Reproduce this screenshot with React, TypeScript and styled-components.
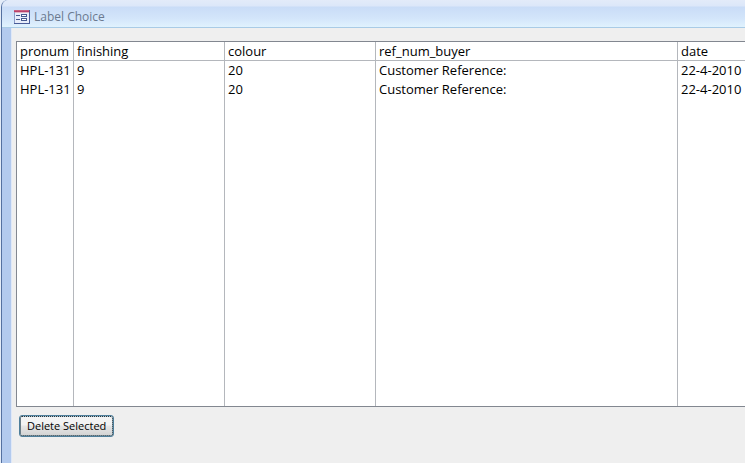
import React from "react";
import styled, { createGlobalStyle } from "styled-components";

const GlobalStyle = createGlobalStyle`
  * { box-sizing: border-box; }
  body { margin: 0; background: #e4ecf8; }
`;

const Frame = styled.div`
  display: flex;
  flex-direction: column;
  height: 100vh;
  min-height: 200px;
  overflow: hidden;
  margin-left: 1px;
  border-left: 1px solid #5571a0;
  border-top-left-radius: 7px;
  background: #b3caee;
`;

const TitleBar = styled.header`
  display: flex;
  align-items: center;
  gap: 4px;
  height: 28px;
  flex: none;
  padding: 6px 12px 0;
  border-bottom: 1px solid #a9cbe6;
  background: linear-gradient(#e3ebf9 0, #dce7f9 6px, #c9dcf7 7px, #d3e5fa 18px, #e0f2fe 27px);
`;

const Title = styled.h1`
  margin: 0;
  font: 400 12px/18px "Open Sans", sans-serif;
  color: #6b7a90;
`;

const Body = styled.main`
  display: flex;
  flex-direction: column;
  flex: 1;
  min-height: 0;
  margin-left: 9px;
  padding: 13px 0 0 4px;
  border-left: 1px solid #dfe8f7;
  background: #efefef;
`;

const ListBox = styled.div`
  display: grid;
  flex: 1;
  min-height: 0;
  border: 1px solid #828790;
  border-right: 0;
  background: #fff;
`;

const List = styled.table`
  width: 100%;
  height: 100%;
  table-layout: fixed;
  border-collapse: separate;
  border-spacing: 0;
  font: 400 13px/18px "Open Sans", sans-serif;
  color: #000;
`;

const Column = styled.col<{ $width?: number }>`
  width: ${({ $width }) => ($width ? `${$width}px` : "auto")};
`;

const Row = styled.tr`
  height: 19px;
`;

const FillerRow = styled.tr`
  height: auto;
`;

const Cell = styled.td`
  padding: 0 0 1px 3px;
  border-right: 1px solid #b4b7bc;
  text-align: left;
  white-space: nowrap;
  &:last-child { border-right: 0; }
`;

const HeadCell = styled(Cell).attrs({ as: "th", scope: "col" })`
  padding-bottom: 0;
  border-bottom: 1px solid #b4b7bc;
  font-weight: 400;
`;

const Actions = styled.footer`
  flex: none;
  height: 56px;
  padding: 8px 3px;
`;

const Button = styled.button`
  height: 22px;
  padding: 0 7px;
  border: 1px solid #4f7f9b;
  border-radius: 3px;
  outline: 1px dotted #333;
  outline-offset: -2px;
  box-shadow: inset 0 0 0 1px #a5c9dc;
  background: linear-gradient(#f3f3f3 0 45%, #e6e6e6 50%, #d2d2d2);
  font: 400 11px/18px "Open Sans", sans-serif;
  color: #000;
`;

const FormIcon = () => (
  <svg width="16" height="16" viewBox="0 0 16 16" aria-hidden="true" shapeRendering="crispEdges">
    <path d="M0 1h16v14H0z" fill="#e8edfa" />
    <path d="M0 1h15v1H0z" fill="#c9607f" />
    <path d="M0 2h15v1H0z" fill="#b8416b" />
    <path d="M0 3h15v1H0z" fill="#e0b4c4" />
    <path d="M0 3h1v11H0z" fill="#8a9bc8" />
    <path d="M15 1h1v14H0v-1h15z" fill="#4a5c98" />
    <path d="M2 6h4v1H2zM2 10h4v1H2z" fill="#46598f" />
    <path d="M7.5 5.5h5v2h-5zM7.5 9.5h5v2h-5z" fill="#fff" stroke="#46598f" />
  </svg>
);

const columns = [
  { name: "pronum", width: 57 },
  { name: "finishing", width: 151 },
  { name: "colour", width: 151 },
  { name: "ref_num_buyer", width: 302 },
  { name: "date", width: undefined },
];

const rows = [
  ["HPL-131", "9", "20", "Customer Reference:", "22-4-2010"],
  ["HPL-131", "9", "20", "Customer Reference:", "22-4-2010"],
];

export default function App() {
  return (
    <>
      <GlobalStyle />
      <Frame>
        <TitleBar>
          <FormIcon />
          <Title>Label Choice</Title>
        </TitleBar>
        <Body>
          <ListBox>
            <List aria-label="Label Choice">
              <colgroup>
                {columns.map((c) => <Column key={c.name} $width={c.width} />)}
              </colgroup>
              <thead>
                <Row>{columns.map((c) => <HeadCell key={c.name}>{c.name}</HeadCell>)}</Row>
              </thead>
              <tbody>
                {rows.map((row, r) => (
                  <Row key={r}>{row.map((value, i) => <Cell key={i}>{value}</Cell>)}</Row>
                ))}
                <FillerRow aria-hidden="true">
                  {columns.map((c) => <Cell key={c.name} />)}
                </FillerRow>
              </tbody>
            </List>
          </ListBox>
          <Actions>
            <Button type="button">Delete Selected</Button>
          </Actions>
        </Body>
      </Frame>
    </>
  );
}
